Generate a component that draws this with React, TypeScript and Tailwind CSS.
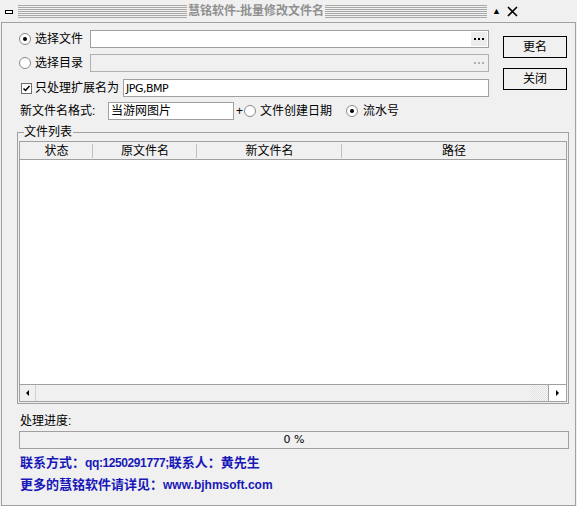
import React from "react";

const font = "font-['Liberation_Sans','Noto_Sans_CJK_SC',sans-serif]";

function Radio({ checked }: { checked?: boolean }) {
  return (
    <span className="flex h-[12px] w-[12px] shrink-0 items-center justify-center rounded-full border border-[#8a8a8a] bg-white">
      {checked ? <span className="h-[4px] w-[4px] rounded-full bg-black" /> : null}
    </span>
  );
}

function Checkbox() {
  return (
    <span className="flex h-[11px] w-[11px] shrink-0 items-center justify-center border border-[#6e6e6e] bg-white">
      <svg width="9" height="9" viewBox="0 0 9 9">
        <path d="M1.5 4.5 L3.5 6.5 L7.5 2" stroke="#000" strokeWidth="1.5" fill="none" />
      </svg>
    </span>
  );
}

function Dots({ muted }: { muted?: boolean }) {
  const c = muted ? "bg-[#b0b0b0]" : "bg-black";
  return (
    <span
      className={`flex h-full w-[16px] items-center justify-center gap-[2px] ${muted ? "" : "bg-[#ececec]"}`}
    >
      <span className={`h-[2px] w-[2px] ${c}`} />
      <span className={`h-[2px] w-[2px] ${c}`} />
      <span className={`h-[2px] w-[2px] ${c}`} />
    </span>
  );
}

function TitleLines({ className }: { className: string }) {
  return (
    <div
      className={`h-[13px] bg-[repeating-linear-gradient(to_bottom,#a8a8a8_0px,#a8a8a8_1px,transparent_1px,transparent_2px)] ${className}`}
    />
  );
}

function HeaderCell({ label, width, last }: { label: string; width: string; last?: boolean }) {
  return (
    <div className={`relative flex h-full items-center justify-center ${width}`}>
      <span className="text-[12px] leading-none">{label}</span>
      {!last ? <span className="absolute right-0 top-[2px] h-[14px] w-px bg-[#c0c0c0]" /> : null}
    </div>
  );
}

export default function App() {
  return (
    <div className={`h-[506px] w-[577px] overflow-hidden bg-[#f0f0f0] text-black ${font}`}>
      {/* title bar */}
      <div className="flex h-[22px] items-center pl-[5px] pr-[6px]">
        <span className="mt-[1px] h-[4px] w-[8px] border border-black bg-white" />
        <TitleLines className="ml-[5px] w-[169px]" />
        <span className="px-[1px] text-[12px] font-bold leading-none text-[#909090]">慧铭软件-批量修改文件名</span>
        <TitleLines className="w-[162px]" />
        <span className="ml-[5px] text-[9px] leading-none">▲</span>
        <svg className="ml-[6px]" width="11" height="11" viewBox="0 0 11 11">
          <path d="M1 1 L10 10 M10 1 L1 10" stroke="#000" strokeWidth="1.6" />
        </svg>
      </div>

      <div className="mx-[1px] flex h-[484px] flex-col border border-[#a0a0a0]">
        {/* top controls */}
        <div className="flex">
          <div className="ml-[17px] flex w-[470px] flex-col pt-[7px] text-[12px] leading-none">
            <div className="flex h-[18px] items-center">
              <Radio checked />
              <span className="ml-[4px] w-[55px]">选择文件</span>
              <div className="flex h-[18px] flex-1 items-center justify-end border border-[#a0a0a0] bg-white p-px">
                <Dots />
              </div>
            </div>
            <div className="mt-[6px] flex h-[18px] items-center">
              <Radio />
              <span className="ml-[4px] w-[55px]">选择目录</span>
              <div className="flex h-[18px] flex-1 items-center justify-end border border-[#b0b0b0] bg-[#f0f0f0] p-px">
                <Dots muted />
              </div>
            </div>
            <div className="mt-[7px] flex h-[18px] items-center">
              <span className="ml-[2px]">
                <Checkbox />
              </span>
              <span className="ml-[3px] w-[88px]">只处理扩展名为</span>
              <div className="flex h-[18px] flex-1 items-center border border-[#a0a0a0] bg-white pl-[2px] text-[11px] font-['DejaVu_Sans',sans-serif] tracking-[-0.5px]">
                JPG,BMP
              </div>
            </div>
            <div className="mt-[5px] flex h-[18px] items-center">
              <span className="ml-[1px] w-[88px]">新文件名格式:</span>
              <div className="flex h-[18px] w-[126px] items-center border border-[#a0a0a0] bg-white pl-[2px]">
                当游网图片
              </div>
              <span className="ml-[2px] mr-[1px]">+</span>
              <Radio />
              <span className="ml-[4px]">文件创建日期</span>
              <span className="ml-[14px]">
                <Radio checked />
              </span>
              <span className="ml-[5px]">流水号</span>
            </div>
          </div>
          <div className="ml-[14px] flex flex-col pt-[13px] text-[12px] leading-none">
            <button className="flex h-[22px] w-[64px] items-center justify-center border border-black bg-[#f0f0f0]">
              更名
            </button>
            <button className="mt-[10px] flex h-[22px] w-[64px] items-center justify-center border border-black bg-[#f0f0f0]">
              关闭
            </button>
          </div>
        </div>

        {/* group box */}
        <div className="relative ml-[15px] mt-[12px] h-[272px] w-[552px] border border-[#a0a0a0] px-[1px] pb-[1px] pt-[8px]">
          <span className="absolute left-[6px] top-[-7px] bg-[#f0f0f0] pr-[1px] text-[12px] leading-[13px]">文件列表</span>
          <div className="flex h-full flex-col border border-[#a0a0a0] bg-white">
            <div className="flex h-[18px] border-b border-[#a0a0a0] bg-[#f0f0f0]">
              <HeaderCell label="状态" width="w-[73px]" />
              <HeaderCell label="原文件名" width="w-[104px]" />
              <HeaderCell label="新文件名" width="w-[145px]" />
              <HeaderCell label="路径" width="flex-1" last />
            </div>
            <div className="flex-1" />
            <div className="flex h-[17px] items-stretch border-t border-[#a0a0a0] bg-[#f0f0f0]">
              <div className="flex w-[16px] items-center justify-center border-r border-[#d0d0d0]">
                <span className="h-0 w-0 border-y-[3px] border-r-[3px] border-y-transparent border-r-black" />
              </div>
              <div className="flex-1" />
              <div className="w-[18px] bg-[repeating-conic-gradient(#e0e0e0_0%_25%,#f8f8f8_0%_50%)] bg-[length:2px_2px]" />
              <div className="flex w-[18px] items-center justify-center border-l border-[#a0a0a0] bg-white">
                <span className="h-0 w-0 border-y-[3px] border-l-[3px] border-y-transparent border-l-black" />
              </div>
            </div>
          </div>
        </div>

        {/* progress */}
        <div className="ml-[18px] mt-[10px] text-[12px] leading-[14px]">处理进度:</div>
        <div className="ml-[17px] mt-[3px] flex h-[18px] w-[550px] items-center justify-center border border-[#a0a0a0] text-[11px] font-['DejaVu_Sans',sans-serif]">
          0 %
        </div>

        {/* contact */}
        <div className="ml-[18px] mt-[7px] flex items-baseline text-[13px] font-bold leading-[14px] text-[#1818b8]">
          联系方式：<span className="text-[12px] tracking-[-0.4px]">qq:1250291777;</span>联系人：黄先生
        </div>
        <div className="ml-[18px] mt-[8px] flex items-baseline text-[13px] font-bold leading-[14px] text-[#1818b8]">
          更多的慧铭软件请详见：<span className="text-[12px]">www.bjhmsoft.com</span>
        </div>
      </div>
    </div>
  );
}
